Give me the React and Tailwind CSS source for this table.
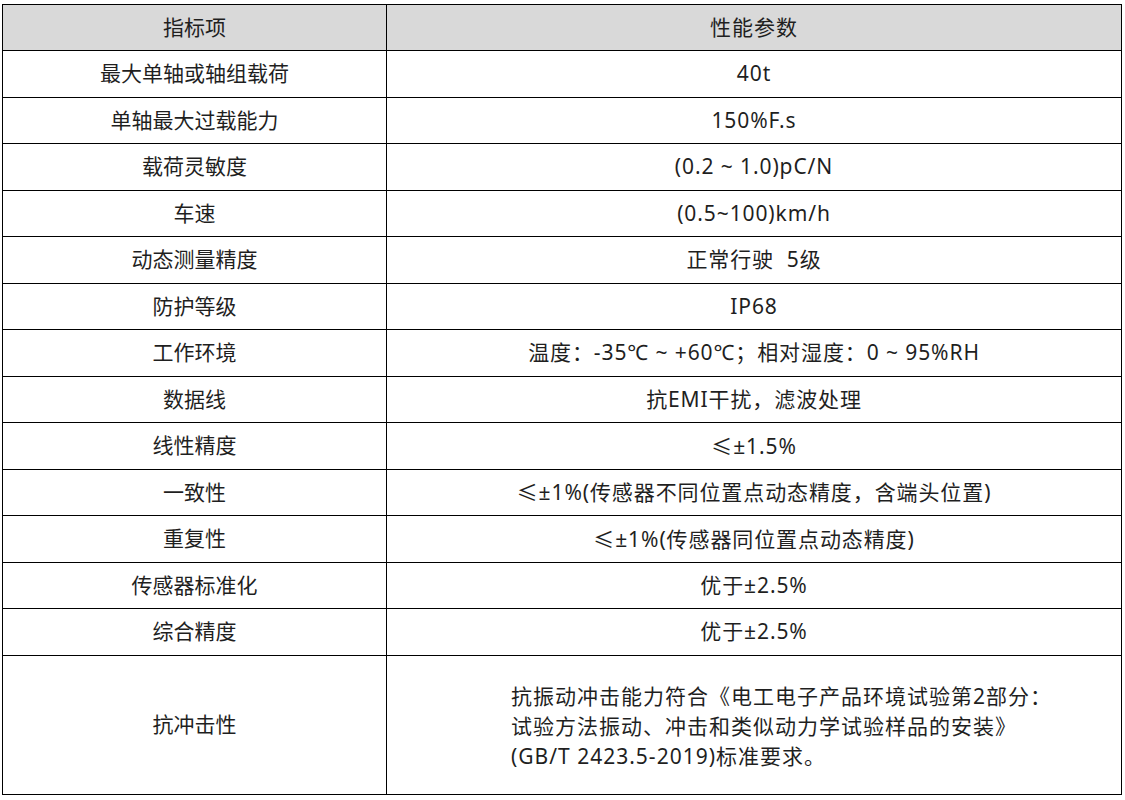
const cjk = { fontFamily: '"Noto Sans CJK SC", sans-serif' };
const Le = () => <span style={cjk}>≤</span>;

const rows = [
  ['最大单轴或轴组载荷', '40t'],
  ['单轴最大过载能力', '150%F.s'],
  ['载荷灵敏度', '(0.2 ~ 1.0)pC/N'],
  ['车速', '(0.5~100)km/h'],
  ['动态测量精度', '正常行驶  5级'],
  ['防护等级', 'IP68'],
  ['工作环境', '温度：-35℃ ~ +60℃；相对湿度：0 ~ 95%RH'],
  ['数据线', '抗EMI干扰，滤波处理'],
  ['线性精度', <><Le />±1.5%</>],
  ['一致性', <><Le />±1%(传感器不同位置点动态精度，含端头位置)</>],
  ['重复性', <><Le />±1%(传感器同位置点动态精度)</>],
  ['传感器标准化', '优于±2.5%'],
  ['综合精度', '优于±2.5%'],
];

export default function App() {
  return (
    <div
      className="min-h-[800px] bg-white pt-[4px] pl-[2px] text-[#1f1f1f]"
      style={{ fontFamily: '"Noto Sans", "Noto Sans CJK SC", sans-serif' }}
    >
      <table className="w-[1120px] border-collapse text-[21px] leading-none">
        <thead>
          <tr className="h-[46px] bg-[#d9d9d9]">
            <th className="w-[384px] border border-black font-normal">指标项</th>
            <th className="border border-black font-normal tracking-[1px]">性能参数</th>
          </tr>
        </thead>
        <tbody>
          {rows.map(([k, v]) => (
            <tr key={k} className="h-[46.5px]">
              <td className="border border-black text-center">{k}</td>
              <td className="border border-black text-center whitespace-pre tracking-[0.9px]">{v}</td>
            </tr>
          ))}
          <tr className="h-[139px]">
            <td className="border border-black text-center">抗冲击性</td>
            <td className="border border-black text-left pl-[124px] tracking-[1px]">
              <div className="leading-[30px] pt-[2px]">
                抗振动冲击能力符合《电工电子产品环境试验第2部分：<br />
                试验方法振动、冲击和类似动力学试验样品的安装》<br />
                (GB/T 2423.5-2019)标准要求。
              </div>
            </td>
          </tr>
        </tbody>
      </table>
    </div>
  );
}
